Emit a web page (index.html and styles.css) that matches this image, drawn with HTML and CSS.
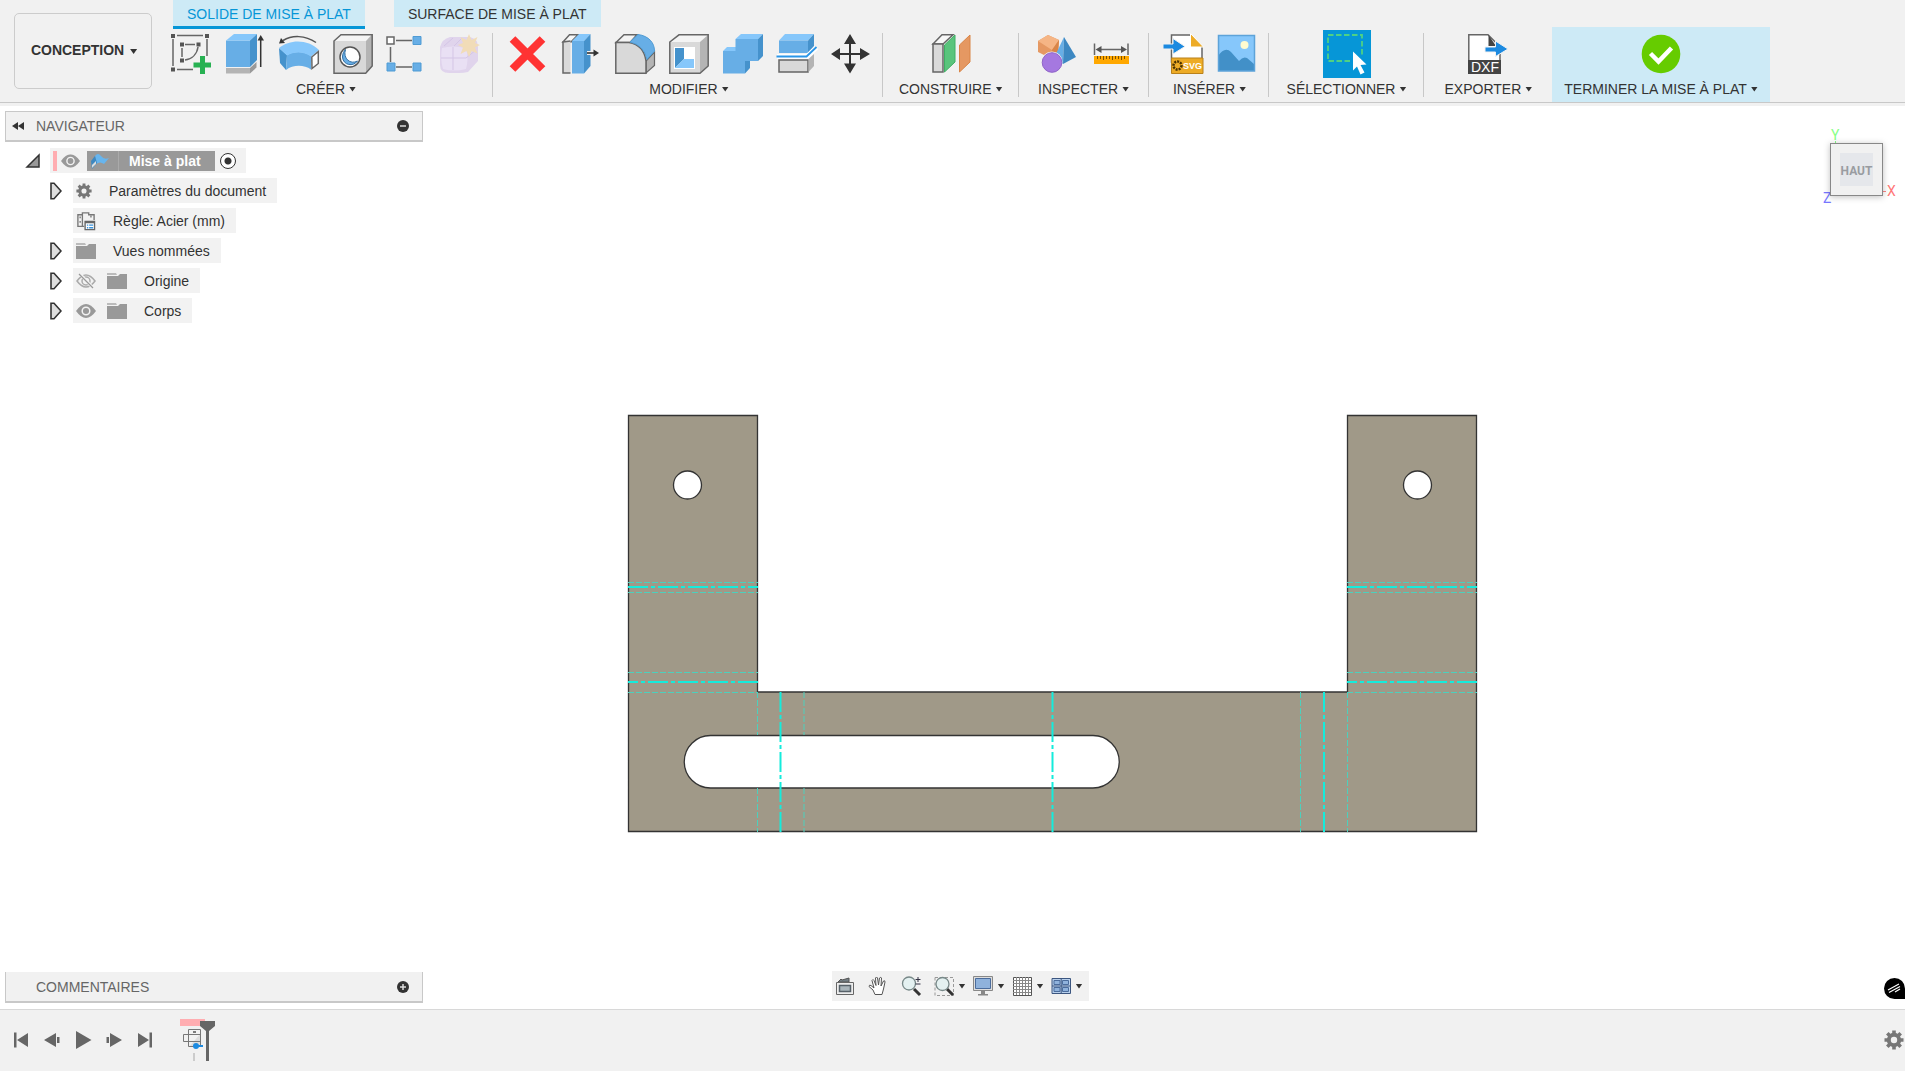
FILE: index.html
```html
<!DOCTYPE html>
<html lang="fr">
<head>
  <meta charset="UTF-8" />
  <meta name="viewport" content="width=device-width, initial-scale=1.0" />
  <title>Mise à plat</title>
  <link rel="stylesheet" href="styles.css">
</head>
<body>
  <header class="toolbar">
    <button class="workspace-button">CONCEPTION <span class="caret"></span></button>

    <div class="ribbon">
      <nav class="tabs">
        <button class="tab active">SOLIDE DE MISE À PLAT</button>
        <button class="tab">SURFACE DE MISE À PLAT</button>
      </nav>

      <div class="groups">
        <section class="group">
          <div class="icons">
            <button class="tool" aria-label="Esquisse"><svg viewBox="0 0 40 40">
              <g fill="none" stroke="#666" stroke-width="1.5"><path d="M6 1.5h26M2 5v27M36 5v17M6 35.500h16M14 10.500h10M11 14v9M27 13c-1 7-6 12-13 13"/></g>
              <g fill="#555"><path d="M0 0h4v4H0zM34 0h4v4h-4zM0 33.500h4v4H0zM9 8.500h4v4H9zM25.500 8.500h4v4h-4zM9 24.500h4v4H9z"/></g>
              <path fill="#27b152" d="M29 22h5v6.500h6v5h-6V40h-5v-6.500h-6.500v-5H29z"/></svg></button>
            <button class="tool" aria-label="Extrusion"><svg viewBox="0 0 40 40">
              <path fill="#b4b4b4" d="M1 34h24v5.500H1z"/><path fill="#999" d="M25 34l6.500-6v5.500l-6.500 6z"/>
              <path fill="#67aee6" d="M1 6.500h24V33H1z"/><path fill="#86c7fb" d="M1 6.500 9 0h23l-7 6.500z"/><path fill="#4592cc" d="M25 6.500 32 0v26l-7 7z"/>
              <path fill="none" stroke="#333" stroke-width="1.500" d="M35.700 5v28"/><path fill="#333" d="M32.500 6.500 35.700 1 39 6.500z"/></svg></button>
            <button class="tool" aria-label="Bride"><svg viewBox="0 0 40 40">
              <path fill="#4592cc" d="M0 14l8 7-1 15-6-7z"/><path fill="#67aee6" d="M8 21c7-4 17-4 24 1v13.500c-7-5-18-5-25 .5z"/>
              <path fill="#86c7fb" d="M0 14C11 5 29 5 40 16l-8 6.500c-7-5-17-5-24-1z"/>
              <path fill="#fff" stroke="#666" stroke-width="1.500" d="M32.800 23 39.300 17.500v12L33 34.500z"/>
              <path fill="none" stroke="#555" stroke-width="1.500" d="M37 8.500C26 1 13 1 4 6.500"/><path fill="#333" d="M0 9.500 2 4l4 5z"/></svg></button>
            <button class="tool" aria-label="Perçage"><svg viewBox="0 0 40 40">
              <path fill="#d8d8d8" d="M1 7h32v32H1z"/><path fill="#f4f4f4" d="M1 7l7-6.500h31L33 7z"/><path fill="#b4b4b4" d="M33 7l6-6.500V32l-6 7z"/>
              <path fill="none" stroke="#666" stroke-width="1.500" d="M1 7l7-6.200h31.200V32l-6.500 7.200H1z"/>
              <circle cx="17" cy="23" r="10" fill="#fff" stroke="#555" stroke-width="1.500"/><path fill="#67aee6" stroke="#346fa2" d="M12.500 15.500c-3 9 5 15.500 12 11.500-4 6-14.500 4.500-15-4 0-3.500 1.500-6 3-7.500z"/></svg></button>
            <button class="tool" aria-label="Réseau"><svg viewBox="0 0 40 40">
              <path stroke="#666" stroke-width="1.500" d="M9 6.500h16M3.500 13v15M9 33h16"/>
              <path fill="#fff" stroke="#666" stroke-width="1.500" d="M0 3h7v7H0z"/><path fill="#67aee6" stroke="#4f9bd4" d="M26 2.500h8v8h-8zM26 29h8v8h-8zM0 29h8v8H0z"/></svg></button>
            <button class="tool" aria-label="Créer une forme"><svg viewBox="0 0 40 40" opacity=".8">
              <path fill="#dccdec" d="M9 3h20q8 2 8 10v14L27 38q-4 1-9 1H8q-9 0-9-8V13Q1 5 9 3z"/><path fill="#e8dcf5" d="M1 14q10-3 24 0 3 11 0 21-12 3-23 0-3-10-1-21z"/>
              <path fill="none" stroke="#cdbbe4" d="M12 13v23M0 24h25l10-8M3 12l9-8M13 12l8-8M25 13l6-6"/>
              <path fill="#f2d7aa" d="M28 0l2.500 6 6-3-2.500 6 5 2-5 2.500 2.500 6-6-2.500L28 23l-2.500-6-6 3 2.500-6.500-5-2.500 5-2-2.500-6 6 3z"/></svg></button>
          </div>
          <button class="group-label">CRÉER<span class="caret"></span></button>
        </section>

        <section class="group">
          <div class="icons">
            <button class="tool" aria-label="Supprimer"><svg viewBox="0 0 40 40"><path stroke="#f33" stroke-width="8" d="M5.500 5 35.500 35M35.500 5 5.500 35"/></svg></button>
            <button class="tool" aria-label="Appuyer/Tirer"><svg viewBox="0 0 40 40">
              <path fill="#f7f7f7" stroke="#666" stroke-width="1.500" d="M2 8l6.500-7.200H17L10 8z"/><path fill="#d9d9d9" stroke="#666" stroke-width="1.500" d="M9.500 39H2V8l7.500-1"/>
              <path fill="#67aee6" d="M11 7h12v32.500H11z"/><path fill="#86c7fb" d="M11 7l7-7h11.500L23 7z"/><path fill="#4592cc" d="M23 7l6.500-7v32L23 39.500z"/>
              <path fill="none" stroke="#f1f1f1" stroke-width="4" d="M26 19h8"/><path stroke="#333" stroke-width="1.600" d="M26 19h8"/><path fill="#333" d="M32.500 15.500 38 19l-5.500 3.500z"/></svg></button>
            <button class="tool" aria-label="Congé"><svg viewBox="0 0 40 40">
              <path fill="#f4f4f4" stroke="#666" stroke-width="1.500" d="M1 8.500l8-7.700h13L15 8.500z"/><path fill="#b4b4b4" stroke="#666" stroke-width="1.200" d="M31 27l8.500-9v13.500L31 39z"/>
              <path fill="#d9d9d9" stroke="#666" stroke-width="1.500" d="M.8 8.500H14Q29 11 31 27v12.200H.8z"/><path fill="#67aee6" stroke="#4f9bd4" d="M15 8 23 .5C34 2 39.500 9 39.500 17L32 25.500Q29 11 15 8z"/></svg></button>
            <button class="tool" aria-label="Coque"><svg viewBox="0 0 40 40">
              <path fill="#d9d9d9" d="M1 8h30v31H1z"/><path fill="#f4f4f4" d="M1 8l9-7h29l-8 7z"/><path fill="#b4b4b4" d="M31 8l8-7v31l-8 7z"/><path fill="none" stroke="#666" stroke-width="1.500" d="M.8 8 10 .8h29.200V32L31 39.200H.8z"/>
              <path fill="#fff" d="M5 13h21v22H5z"/><path fill="#4592cc" d="M6 14h9v11l-9 9z"/><path fill="#86c7fb" d="M6 34l9-9h10v9z"/></svg></button>
            <button class="tool" aria-label="Combiner"><svg viewBox="0 0 40 40">
              <path fill="#86c7fb" d="M12.500 5 18 0h22l-5 5zM0 17l4-4h9v4z"/><path fill="#67aee6" d="M12.500 5H35v22H22v12.500H0V17h12.500z"/><path fill="#4592cc" d="M35 5l5-5v22l-5 5zM22 27h5v7l-5 5.500z"/></svg></button>
            <button class="tool" aria-label="Scinder"><svg viewBox="0 0 40 40">
              <path fill="#86c7fb" d="M2 6.500 8 0h29l-6 6.500z"/><path fill="#67aee6" d="M2 6.500h29V19H2z"/><path fill="#4592cc" d="M31 6.500 37 0v12l-6 7z"/>
              <path fill="#d9d9d9" stroke="#666" stroke-width="1.500" d="M2 26h29v12H2z"/><path fill="#b4b4b4" d="M31.500 25 37 20v12l-5.500 6z"/>
              <path fill="none" stroke="#fff" stroke-width="5" d="M0 22.500h30l9.500-9"/><path fill="none" stroke="#2a96e8" stroke-width="1.800" d="M-.5 22.500h30l10-9.500"/></svg></button>
            <button class="tool" aria-label="Déplacer"><svg viewBox="0 0 40 40">
              <path stroke="#333" stroke-width="2" d="M19 8v24M7 20h24"/><path fill="#333" d="M19 0l6 10H13zM19 39.500l6-10H13zM0 20l9-6v12zM39 20l-10-6v12z"/></svg></button>
          </div>
          <button class="group-label">MODIFIER<span class="caret"></span></button>
        </section>

        <section class="group single">
          <div class="icons">
            <button class="tool" aria-label="Plan de décalage"><svg viewBox="0 0 40 40">
              <path fill="#f7f7f7" stroke="#666" stroke-width="1.500" d="M2 10l9-9.200h11L12 10z"/><path fill="#d9d9d9" stroke="#666" stroke-width="1.500" d="M2 10h10v28H2z"/>
              <path fill="#59c47c" stroke="#3fae64" d="M13.500 11 24 1v27L13.500 38z"/><path fill="#e59862" stroke="#d98547" d="M28.500 11 39 1v27L28.500 38z"/></svg></button>
          </div>
          <button class="group-label">CONSTRUIRE<span class="caret"></span></button>
        </section>

        <section class="group wide">
          <div class="icons">
            <button class="tool" aria-label="Analyse"><svg viewBox="0 0 40 40">
              <path fill="#e59862" d="M1 7l10-6 11 5-1 14-8 4-12-6z"/><path fill="#f5b585" d="M1 7l10-6 11 5-7 10z"/><path fill="#d98547" d="M15 16l7-10-1 14-8 4z"/>
              <path fill="#67aee6" d="M27 3 17 24l9 6z"/><path fill="#3d88c2" d="M27 3l12 20-13 7z"/>
              <circle cx="15" cy="28" r="10.500" fill="#f1f1f1"/><circle cx="15" cy="28.500" r="9.800" fill="#a578e0" stroke="#8f63c8"/></svg></button>
            <button class="tool" aria-label="Mesurer"><svg viewBox="0 0 40 40">
              <path stroke="#666" stroke-width="1.500" d="M3.500 9.500V21M37 9.500V21M7 15.500h26"/><path fill="#555" d="M4.500 15.500l6-3.500v7zM36 15.500l-6-3.500v7z"/>
              <path fill="#ffa800" d="M3 22h35v8H3z"/><path stroke="#7c5000" d="M6.500 22v3M9.500 22v3M12.500 22v4M15.500 22v3M18.500 22v3M21.500 22v4M24.500 22v3M27.500 22v3M30.500 22v4M33.500 22v3"/></svg></button>
          </div>
          <button class="group-label">INSPECTER<span class="caret"></span></button>
        </section>

        <section class="group">
          <div class="icons">
            <button class="tool" aria-label="Insérer un SVG"><svg viewBox="0 0 40 40">
              <path fill="#fff" stroke="#666" stroke-width="1.500" d="M8.500 1H27l12 12v15H8.500z"/><path fill="#edab26" stroke="#fff" d="M27.500-.5 40.500 13h-13z"/>
              <path fill="#1c8ae0" stroke="#f1f1f1" d="M0 10h10V4.500L22 12.500 10 20v-5H0z"/><path fill="#edab26" stroke="#b9811a" d="M8.500 24h31.500v15.500H8.500z"/>
              <circle cx="14.500" cy="31.500" r="4" fill="none" stroke="#493100" stroke-width="2.500" stroke-dasharray="2 1"/><text class="svg-tag" x="20" y="35">SVG</text></svg></button>
            <button class="tool" aria-label="Insérer une image"><svg viewBox="0 0 40 40">
              <path fill="#86c7fb" d="M1 1h36v36H1z"/><path fill="#4290c8" d="M1 22Q8 12 14 18l8 9q4-5 8-3l7 6v7H1z"/><circle cx="27.500" cy="11" r="4" fill="#fffbd0"/><path fill="none" stroke="#5da3d9" stroke-width="1.500" d="M1.500 1.500h36v35.500h-36z"/></svg></button>
          </div>
          <button class="group-label">INSÉRER<span class="caret"></span></button>
        </section>

        <section class="group wide">
          <div class="icons">
            <button class="tool selected" aria-label="Sélectionner"><svg viewBox="0 0 48 48">
              <path fill="none" stroke="#4fd184" stroke-width="1.800" stroke-dasharray="5.500 2.500" d="M27 31H5V5h34v20"/><path fill="#fff" d="M30 21.500l13.500 13-6 .5 4 7.500-4 2-3.500-8-4 4z"/></svg></button>
          </div>
          <button class="group-label">SÉLECTIONNER<span class="caret"></span></button>
        </section>

        <section class="group last">
          <div class="icons">
            <button class="tool" aria-label="Exporter en DXF"><svg viewBox="0 0 40 40">
              <path fill="#fff" stroke="#666" stroke-width="1.500" d="M.8.800H20l12 12V28H.8z"/><path fill="#444" d="M20.500 1 28 12h-7.500z"/><path fill="#1c8ae0" stroke="#f1f1f1" d="M17 13h10.500V7L40 15l-12.500 7.500V18H17z"/>
              <path fill="#444" d="M0 26h33v14H0z"/><text class="dxf-tag" x="3" y="38">DXF</text></svg></button>
          </div>
          <button class="group-label">EXPORTER<span class="caret"></span></button>
        </section>

        <section class="group finish">
          <div class="icons">
            <button class="tool" aria-label="Terminer"><svg viewBox="0 0 40 40"><circle cx="20" cy="20" r="19.300" fill="#6c0"/><path fill="none" stroke="#fff" stroke-width="4.500" d="M9.500 19.500l8 8 13-13.500"/></svg></button>
          </div>
          <button class="group-label">TERMINER LA MISE À PLAT<span class="caret"></span></button>
        </section>
      </div>
    </div>
  </header>

  <main class="workspace">
    <!-- flat pattern: body, cut-outs, bend lines -->
    <svg class="model" viewBox="0 0 852 420" role="img" aria-label="Pièce dépliée">
      <path class="body" fill-rule="evenodd" d="M1.500 1.500H130.500V278H720.500V1.500H849.500V417.500H1.500zM46.500 71a14 14 0 1 0 28 0a14 14 0 1 0-28 0zM776.500 71a14 14 0 1 0 28 0a14 14 0 1 0-28 0zM83.500 321.500H466a26.200 26.200 0 0 1 0 52.500H83.500a26.200 26.200 0 0 1 0-52.500z"/>
      <g class="bend-edge">
        <path d="M1 168.500h130M1 178.500h130M1 258.500h130M1 278.500h130M720 168.500h130M720 178.500h130M720 258.500h130M720 278.500h130"/>
        <path d="M130.500 278v43M130.500 374v44M177 278v43M177 374v44M673.500 278v140M720.500 278v140"/>
      </g>
      <g class="bend-axis">
        <path d="M1 173h130M720 173h130M153.500 278v141M697 278v141"/>
        <path stroke-dashoffset="10" d="M1 268h130M720 268h130"/>
        <path d="M425.500 278v141"/>
      </g>
    </svg>

    <div class="overlay-row">
      <aside class="browser">
        <div class="panel-head">
          <svg class="collapse" viewBox="0 0 12 8"><path fill="#333" d="M6 0v8L0 4zM12 0v8L6 4z"/></svg>
          <span>NAVIGATEUR</span>
          <button class="round-button" aria-label="Réduire"><svg viewBox="0 0 12 12"><circle cx="6" cy="6" r="6" fill="#333"/><path stroke="#ddd" stroke-width="1.500" d="M3 6h6"/></svg></button>
        </div>

        <ul class="tree">
          <li class="root">
            <svg class="root-arrow" viewBox="0 0 14 14"><path fill="#999" stroke="#333" stroke-width="1.500" d="M1 13 13 1v12z"/></svg>
            <div class="chip">
              <span class="mark"></span>
              <svg class="eye" viewBox="0 0 20 14"><use href="#eye-shape"/></svg>
              <span class="title"><svg class="sheet" viewBox="0 0 18 16"><path fill="#67b5ee" d="M4 3q3-4 6 0 3 4 8 2l-5 6q-4-3-8 0z"/><path fill="#3e88c0" d="M0 8l4-5 2 7-5 6z"/><path fill="#ddd" d="M1 15v-3l4-4v3z"/></svg><b>Mise à plat</b></span>
              <input class="activate" type="radio" name="component" aria-label="Activer Mise à plat" checked />
            </div>
          </li>
          <li>
            <svg class="arrow" viewBox="0 0 12 18"><use href="#arrow-shape"/></svg>
            <div class="chip"><svg class="gear" viewBox="0 0 20 20"><use href="#gear-shape"/></svg><span class="name">Paramètres du document</span></div>
          </li>
          <li>
            <span class="arrow"></span>
            <div class="chip"><svg class="icon" viewBox="0 0 20 20"><path fill="none" stroke="#777" stroke-width="1.500" d="M8 16H1V3h5V1h7v2h6v6M6 3v13"/><path stroke="#777" stroke-width="1.500" stroke-dasharray="2 3" d="M3.500 5v9M15.500 4v5"/><path fill="#fff" stroke="#666" stroke-width="1.500" d="M9 10.500h10.500v9H9z"/><path stroke="#666" stroke-width="2" d="M9 11.500h11"/><path stroke="#3a93dc" stroke-width="1.500" d="M11 14.500h1.500M13.500 14.500H18M11 17.500h1.500M13.500 17.500H18"/></svg><span class="name">Règle: Acier (mm)</span></div>
          </li>
          <li>
            <svg class="arrow" viewBox="0 0 12 18"><use href="#arrow-shape"/></svg>
            <div class="chip"><svg class="icon" viewBox="0 0 20 16"><use href="#folder-shape"/></svg><span class="name">Vues nommées</span></div>
          </li>
          <li>
            <svg class="arrow" viewBox="0 0 12 18"><use href="#arrow-shape"/></svg>
            <div class="chip"><svg class="icon" viewBox="0 0 20 16"><path fill="none" stroke="#aaa" stroke-width="1.500" d="M1 8q9-12 18 0-9 12-18 0z"/><circle cx="10" cy="8" r="4" fill="none" stroke="#aaa" stroke-width="1.500"/><path stroke="#f2f2f2" stroke-width="3" d="M4 1l13 14"/><path stroke="#999" stroke-width="1.200" d="M3 1l14 14"/></svg><svg class="icon second" viewBox="0 0 20 16"><use href="#folder-shape"/></svg><span class="name">Origine</span></div>
          </li>
          <li>
            <svg class="arrow" viewBox="0 0 12 18"><use href="#arrow-shape"/></svg>
            <div class="chip"><svg class="icon" viewBox="0 0 20 14"><use href="#eye-shape"/></svg><svg class="icon second" viewBox="0 0 20 16"><use href="#folder-shape"/></svg><span class="name">Corps</span></div>
          </li>
        </ul>
      </aside>

      <svg class="view-cube" viewBox="0 0 84 84">
        <text class="axis-y" x="13" y="12">Y</text><path stroke="#8f8" d="M17.500 13v4"/>
        <text class="axis-x" x="69" y="68">X</text><path stroke="#f88" d="M64 63.500h4"/>
        <text class="axis-z" x="5" y="75">Z</text><path stroke="#88f" d="M12 68l4-4"/>
        <rect class="cube-face" x="12.500" y="15.500" width="52" height="52"/>
        <path fill="#e5e7eb" d="M22 25h33v33H22z"/>
        <text class="face-name" x="38.500" y="47">HAUT</text>
      </svg>
    </div>

    <div class="overlay-row bottom">
      <div class="panel-head comments">
        <span>COMMENTAIRES</span>
        <button class="round-button" aria-label="Développer"><svg viewBox="0 0 12 12"><circle cx="6" cy="6" r="6" fill="#333"/><path stroke="#ddd" stroke-width="1.500" d="M3 6h6M6 3v6"/></svg></button>
      </div>

      <div class="view-tools">
        <button aria-label="Orbite"><svg viewBox="0 0 20 20"><path fill="#737e84" stroke="#555" d="M3 6l3-3 1 1 7-2v4z"/><path fill="#eee" stroke="#666" d="M1.500 6.500h17v12h-17z"/><path fill="#a9b4ba" stroke="#566068" stroke-width="1.500" d="M4.500 9.500h11v6h-11z"/></svg></button>
        <button aria-label="Panoramique"><svg viewBox="0 0 20 20"><path fill="#fff" stroke="#555" d="M7 18.500 5 14 1 10.500q0-2 2-1L6 12 4 4.500q1-2 2 0l2 5-.5-7.500q1-2 2 0l1 7 1-7q1.500-1.500 2 0L13 10l2.500-5q1.500-1 1.500 1L15.500 13 14 18.500z"/></svg></button>
        <button aria-label="Zoom"><svg viewBox="0 0 20 20"><path stroke="#333" stroke-width="3" d="M13 13l6 6"/><circle cx="8" cy="7.500" r="6.500" fill="#e4f1f1" stroke="#788" stroke-width="1.300"/><path stroke="#334" d="M14.500 3.500h5M17 1v5M14.500 8h5"/></svg></button>
        <button class="with-caret" aria-label="Ajuster"><svg viewBox="0 0 20 20"><path fill="none" stroke="#999" stroke-dasharray="3 2" d="M1 1.500h18.500v18H1z"/><path stroke="#333" stroke-width="3" d="M13 13l6 6"/><circle cx="8.500" cy="8" r="6.500" fill="#e4f1f1" stroke="#788" stroke-width="1.300"/></svg><span class="caret"></span></button>
        <button class="with-caret" aria-label="Affichage"><svg viewBox="0 0 20 20"><path fill="#ddd" stroke="#888" d="M.5.500h19v14H.5z"/><path fill="#8fb2dc" stroke="#4b6c9c" d="M2.500 2.500h15v10h-15z"/><path fill="#888" d="M8 15h4v3h3v1.500H5V18h3z"/></svg><span class="caret"></span></button>
        <button class="with-caret" aria-label="Grille"><svg viewBox="0 0 20 20"><path fill="#fff" stroke="#555" d="M1.500 1.500h18v18h-18z"/><path stroke="#888" d="M4.500 1v18M7.500 1v18M10.500 1v18M13.500 1v18M16.500 1v18M1 4.500h18M1 7.500h18M1 10.500h18M1 13.500h18M1 16.500h18"/></svg><span class="caret"></span></button>
        <button class="with-caret" aria-label="Fenêtres"><svg viewBox="0 0 20 20"><path fill="#b8d0ec" stroke="#3c5680" d="M1 2.500h18.500v15H1z"/><path fill="#8fb2dc" stroke="#4b6c9c" d="M3 4.500h6v4H3zM11.500 4.500h6v4h-6zM3 11.500h6v4H3zM11.500 11.500h6v4h-6z"/><path stroke="#3c5680" d="M10.200 2v16M1 10h18"/></svg><span class="caret"></span></button>
      </div>

      <svg class="assistant" viewBox="0 0 21 21"><path d="M10.500 0A10.500 10.500 0 0 1 21 10.500V21H10.500A10.500 10.500 0 0 1 10.500 0z"/><path stroke="#fff" stroke-width="1.200" d="M4 12l11-6M5 14.500l11-6M11 14l5-3"/></svg>
    </div>
  </main>

  <footer class="timeline">
    <button aria-label="Début"><svg viewBox="0 0 20 20"><path d="M3 2.500h2.500v15H3zM17 3v14l-11-7z"/></svg></button>
    <button aria-label="Étape précédente"><svg viewBox="0 0 20 20"><path d="M14 3v14L2 10zM15 7h2.500v6H15z"/></svg></button>
    <button aria-label="Lecture"><svg viewBox="0 0 20 20"><path d="M3 1 18.500 10 3 19z"/></svg></button>
    <button aria-label="Étape suivante"><svg viewBox="0 0 20 20"><path d="M6 3v14l12-7zM2.500 7H5v6H2.500z"/></svg></button>
    <button aria-label="Fin"><svg viewBox="0 0 20 20"><path d="M14.500 2.500H17v15h-2.500zM3 3v14l11-7z"/></svg></button>
    <svg class="history" viewBox="0 0 36 42">
      <path fill="#ffadb1" d="M0 0h25v7H0z"/><path fill="#ddd" d="M9 28 21 14v13z"/>
      <path fill="none" stroke="#777" d="M8.500 10.500h12v17h-12zM3.500 15.500h17v7h-17zM8.500 15v8"/><path stroke="#555" stroke-width="1.500" d="M13 13h3"/>
      <circle cx="16" cy="27" r="3" fill="#1c8ae0"/><path stroke="#1c8ae0" stroke-width="2" d="M16 27h7"/>
      <path fill="#ccc" d="M13 34h2v8h-2z"/><path fill="#666" d="M20 2h15v5l-6 5v30h-3V12l-6-5z"/>
    </svg>
    <button class="settings" aria-label="Paramètres"><svg viewBox="0 0 20 20"><use href="#gear-shape"/></svg></button>
  </footer>

  <svg class="shapes" aria-hidden="true">
    <symbol id="eye-shape" viewBox="0 0 20 14"><path fill="#999" d="M0 7q10-14 20 0-10 14-20 0z"/><circle cx="10" cy="7" r="3.800" fill="none" stroke="#f2f2f2" stroke-width="1.500"/></symbol>
    <symbol id="arrow-shape" viewBox="0 0 12 18"><path fill="#ddd" stroke="#333" stroke-width="1.600" d="M1 1.200h3L11 9l-7 7.800H1z"/></symbol>
    <symbol id="folder-shape" viewBox="0 0 20 16"><path fill="#bbb" d="M0 0h9l1 2H0z"/><path fill="#999" d="M0 3h11l2-2h7v15H0z"/></symbol>
    <symbol id="gear-shape" viewBox="0 0 20 20"><circle cx="10" cy="10" r="5.200" fill="none" stroke="#777" stroke-width="4"/><path stroke="#777" stroke-width="3.600" d="M10 .5v4M10 15.500v4M.5 10h4M15.500 10h4M3.300 3.300l2.800 2.800M13.900 13.900l2.800 2.800M3.300 16.700l2.800-2.800M13.900 6.100l2.800-2.800"/></symbol>
  </svg>
</body>
</html>
```

FILE: styles.css
```css
* {
  box-sizing: border-box;
}
html, body {
  margin: 0;
  padding: 0;
  height: 100%;
  overflow: hidden;
}
body {
  display: flex;
  flex-direction: column;
  font-family: "Liberation Sans", Arial, sans-serif;
  font-size: 14px;
  line-height: 16px;
  color: #333;
  background: #fff;
}
button {
  margin: 0;
  padding: 0;
  border: none;
  background: none;
  font: inherit;
  color: inherit;
  cursor: pointer;
  white-space: nowrap;
}
svg {
  display: block;
  flex: none;
  overflow: visible;
}
.caret {
  display: inline-block;
  width: 7px;
  height: 5px;
  background: #333;
  clip-path: polygon(0 0, 100% 0, 50% 100%);
}
.shapes {
  width: 0;
  height: 0;
  position: absolute;
}

/* toolbar */
.toolbar {
  display: flex;
  align-items: flex-start;
  flex: none;
  background: #f1f1f1;
  border-bottom: 1px solid #c8c8c8;
}
.workspace-button {
  flex: none;
  width: 138px;
  height: 76px;
  margin: 13px 5px 0 14px;
  padding: 0 0 2px 2px;
  border: 1px solid #ccc;
  border-radius: 5px;
  font-weight: bold;
}
.workspace-button .caret {
  margin-left: 2px;
  vertical-align: 1px;
}
.tabs {
  display: flex;
  align-items: flex-start;
  gap: 29px;
  height: 27px;
  padding-left: 16px;
}
.tab {
  height: 27px;
  padding: 0 14px;
  background: #cdeaf6;
}
.tab.active {
  height: 29px;
  padding-top: 1px;
  color: #0696d7;
  border-bottom: 3px solid #0696d7;
  z-index: 1;
}
.groups {
  display: flex;
}
.group {
  position: relative;
  display: flex;
  flex-direction: column;
  align-items: center;
  height: 75px;
  padding: 3px 12px 0 14px;
}
.group::after {
  content: "";
  position: absolute;
  right: 0;
  top: 6px;
  width: 1px;
  height: 64px;
  background: #c8c8c8;
}
.group.single {
  padding: 3px 16px 0;
}
.group.wide {
  padding: 3px 18px 0;
}
.group.last {
  padding: 3px 20px 0;
}
.group.last::after, .group.finish::after {
  display: none;
}
.group.finish {
  padding: 3px 12px 0;
  background: #cdeaf6;
}
.icons {
  display: flex;
  align-items: center;
  gap: 14px;
  height: 48px;
}
.tool svg {
  width: 40px;
  height: 40px;
}
.tool.selected {
  background: #0696d7;
}
.tool.selected svg {
  width: 48px;
  height: 48px;
}
.group-label {
  display: flex;
  align-items: center;
  gap: 4px;
  height: 22px;
}
.svg-tag {
  font: bold 9px "Liberation Sans", Arial, sans-serif;
  fill: #fff;
}
.dxf-tag {
  font: 14px "Liberation Sans", Arial, sans-serif;
  fill: #fff;
}

/* workspace */
.workspace {
  position: relative;
  display: flex;
  flex-direction: column;
  justify-content: space-between;
  flex: 1;
  min-height: 0;
  border-top: 3px solid #f1f1f1;
}
.model {
  position: absolute;
  left: 627px;
  top: 308px;
  width: 852px;
  height: 420px;
}
.body {
  fill: #a09988;
  stroke: #333;
  stroke-width: 1.3;
}
.bend-edge {
  stroke: #4cd0bd;
  stroke-dasharray: 6 2;
}
.bend-axis {
  stroke: #14ecdc;
  stroke-width: 2;
  stroke-dasharray: 20 3 4 3;
}
.overlay-row {
  position: relative;
  display: flex;
  justify-content: space-between;
  align-items: flex-start;
  padding: 5px 0 0 5px;
}
.panel-head {
  display: flex;
  align-items: center;
  width: 418px;
  height: 31px;
  padding: 0 13px 0 6px;
  background: #f1f1f1;
  border: 1px solid #c8c8c8;
  border-bottom-width: 2px;
  color: #666;
}
.panel-head .collapse {
  width: 12px;
  height: 8px;
  margin-right: 12px;
}
.round-button {
  margin-left: auto;
}
.round-button svg {
  width: 12px;
  height: 12px;
}
.comments {
  padding-left: 30px;
  border-top: none;
}

/* browser tree */
.tree {
  display: flex;
  flex-direction: column;
  gap: 5px;
  margin: 6px 0 0;
  padding: 0 0 0 45px;
  list-style: none;
}
.tree li {
  display: flex;
  align-items: center;
  height: 25px;
}
.tree .root {
  margin-left: -24px;
}
.root-arrow {
  width: 14px;
  height: 14px;
  margin-right: 10px;
}
.arrow {
  width: 12px;
  height: 18px;
  margin-right: 11px;
}
.chip {
  display: flex;
  align-items: center;
  height: 25px;
  padding: 0 11px 0 3px;
  background: #f2f2f2;
}
.root .chip {
  padding-right: 10px;
}
.mark {
  width: 4px;
  height: 20px;
  margin-right: 4px;
  background: #ffadb1;
}
.eye {
  width: 19px;
  height: 14px;
  margin-right: 7px;
}
.title {
  display: flex;
  align-items: center;
  height: 20px;
  background: #999;
  color: #fff;
}
.title b {
  padding: 2px 14px 2px 10px;
  border-left: 1px solid #aaa;
}
.sheet {
  width: 18px;
  height: 16px;
  margin: 0 9px 0 4px;
}
.activate {
  appearance: none;
  width: 16px;
  height: 16px;
  margin: 0 0 0 5px;
  border: 1px solid #333;
  border-radius: 50%;
  background: radial-gradient(circle, #333 3px, #fff 4px);
}
.icon {
  width: 20px;
  height: 18px;
}
.icon.second {
  margin-left: 11px;
}
.gear {
  width: 16px;
  height: 16px;
}
.name {
  margin-left: 17px;
}

/* view cube */
.view-cube {
  width: 84px;
  height: 84px;
  margin: 17px 3px 0 0;
  font: 14px Roboto, sans-serif;
}
.cube-face {
  fill: #f1f1f1;
  stroke: #888;
  filter: drop-shadow(0 1px 3px rgba(0, 0, 0, 0.25));
}
.face-name {
  font-weight: bold;
  font-size: 12px;
  fill: #999ca1;
  text-anchor: middle;
}
.axis-y {
  fill: #8f8;
}
.axis-x {
  fill: #f77;
}
.axis-z {
  fill: #77f;
}

/* bottom of the workspace */
.bottom {
  display: grid;
  grid-template-columns: 1fr auto 1fr;
  align-items: end;
  padding: 0 0 6px 5px;
}
.view-tools {
  display: flex;
  align-items: center;
  gap: 13px;
  height: 30px;
  margin: 0 0 2px 10px;
  padding: 0 6px 0 3px;
  background: #f1f1f1;
}
.view-tools svg {
  width: 20px;
  height: 20px;
}
.with-caret {
  display: flex;
  align-items: center;
  gap: 5px;
}
.with-caret + .with-caret {
  margin-left: -6px;
}
.assistant {
  width: 21px;
  height: 21px;
  margin-bottom: 4px;
  justify-self: end;
}

/* timeline */
.timeline {
  display: flex;
  align-items: center;
  gap: 11px;
  flex: none;
  height: 62px;
  padding: 0 1px 2px 11px;
  background: #f1f1f1;
  border-top: 1px solid #d8d8d8;
}
.timeline button svg {
  width: 20px;
  height: 20px;
  fill: #666;
}
.history {
  width: 36px;
  height: 42px;
  margin-left: 14px;
}
.timeline .settings {
  margin-left: auto;
}
```
